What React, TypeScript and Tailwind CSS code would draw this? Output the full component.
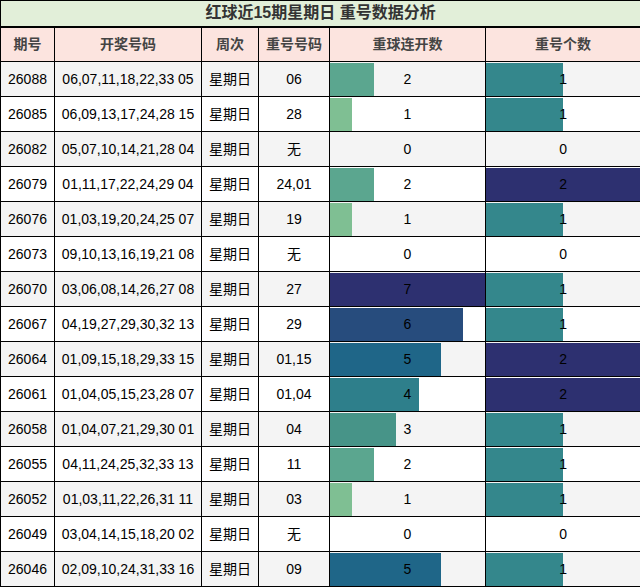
import React from 'react';

interface Row {
  issue: string;
  nums: string;
  week: string;
  repeat: string;
  streak: number;
  count: number;
}

const rows: Row[] = [
  { issue: '26088', nums: '06,07,11,18,22,33 05', week: '星期日', repeat: '06', streak: 2, count: 1 },
  { issue: '26085', nums: '06,09,13,17,24,28 15', week: '星期日', repeat: '28', streak: 1, count: 1 },
  { issue: '26082', nums: '05,07,10,14,21,28 04', week: '星期日', repeat: '无', streak: 0, count: 0 },
  { issue: '26079', nums: '01,11,17,22,24,29 04', week: '星期日', repeat: '24,01', streak: 2, count: 2 },
  { issue: '26076', nums: '01,03,19,20,24,25 07', week: '星期日', repeat: '19', streak: 1, count: 1 },
  { issue: '26073', nums: '09,10,13,16,19,21 08', week: '星期日', repeat: '无', streak: 0, count: 0 },
  { issue: '26070', nums: '03,06,08,14,26,27 08', week: '星期日', repeat: '27', streak: 7, count: 1 },
  { issue: '26067', nums: '04,19,27,29,30,32 13', week: '星期日', repeat: '29', streak: 6, count: 1 },
  { issue: '26064', nums: '01,09,15,18,29,33 15', week: '星期日', repeat: '01,15', streak: 5, count: 2 },
  { issue: '26061', nums: '01,04,05,15,23,28 07', week: '星期日', repeat: '01,04', streak: 4, count: 2 },
  { issue: '26058', nums: '01,04,07,21,29,30 01', week: '星期日', repeat: '04', streak: 3, count: 1 },
  { issue: '26055', nums: '04,11,24,25,32,33 13', week: '星期日', repeat: '11', streak: 2, count: 1 },
  { issue: '26052', nums: '01,03,11,22,26,31 11', week: '星期日', repeat: '03', streak: 1, count: 1 },
  { issue: '26049', nums: '03,04,14,15,18,20 02', week: '星期日', repeat: '无', streak: 0, count: 0 },
  { issue: '26046', nums: '02,09,10,24,31,33 16', week: '星期日', repeat: '09', streak: 5, count: 1 },
];

const streakColors: Record<number, string> = {
  1: '#7fbf93',
  2: '#5ba68f',
  3: '#479488',
  4: '#2e7f8b',
  5: '#1f6688',
  6: '#274c7d',
  7: '#2d3070',
};

const countColors: Record<number, string> = {
  1: '#34878c',
  2: '#2d3070',
};

function Bar({ value, max, color }: { value: number; max: number; color?: string }) {
  const pct = (value / max) * 100;
  const bg = value > 0 && color ? `linear-gradient(to right, ${color} 0%, ${color} ${pct}%, transparent ${pct}%)` : undefined;
  return (
    <td className="border border-black p-0">
      <div className="h-[33px] flex items-center justify-center" style={{ backgroundImage: bg }}>
        {value}
      </div>
    </td>
  );
}

export default function App() {
  return (
    <div className="w-[640px] h-[587px] bg-white" style={{ fontFamily: '"Liberation Sans", "Noto Sans CJK SC", sans-serif' }}>
      <table className="w-[640px] border-collapse table-fixed text-[14px] text-black">
        <colgroup>
          <col className="w-[54px]" />
          <col className="w-[147px]" />
          <col className="w-[57px]" />
          <col className="w-[71px]" />
          <col className="w-[156px]" />
          <col className="w-[155px]" />
        </colgroup>
        <thead>
          <tr>
            <th colSpan={6} className="h-[26px] border border-b-2 border-black bg-[#e2efd9] text-[16px] font-bold text-[#333]">
              红球近15期星期日 重号数据分析
            </th>
          </tr>
          <tr className="bg-[#fce4df] text-[#444]">
            <th className="h-[35px] border border-black font-bold">期号</th>
            <th className="border border-black font-bold">开奖号码</th>
            <th className="border border-black font-bold">周次</th>
            <th className="border border-black font-bold">重号号码</th>
            <th className="border border-black font-bold">重球连开数</th>
            <th className="border border-black font-bold">重号个数</th>
          </tr>
        </thead>
        <tbody>
          {rows.map((r, i) => (
            <tr key={r.issue} className={i % 2 === 0 ? 'bg-[#f4f4f4]' : 'bg-white'}>
              <td className="h-[35px] border border-black text-center">{r.issue}</td>
              <td className="border border-black text-center">{r.nums}</td>
              <td className="border border-black text-center">{r.week}</td>
              <td className="border border-black text-center">{r.repeat}</td>
              <Bar value={r.streak} max={7} color={streakColors[r.streak]} />
              <Bar value={r.count} max={2} color={countColors[r.count]} />
            </tr>
          ))}
        </tbody>
      </table>
    </div>
  );
}
